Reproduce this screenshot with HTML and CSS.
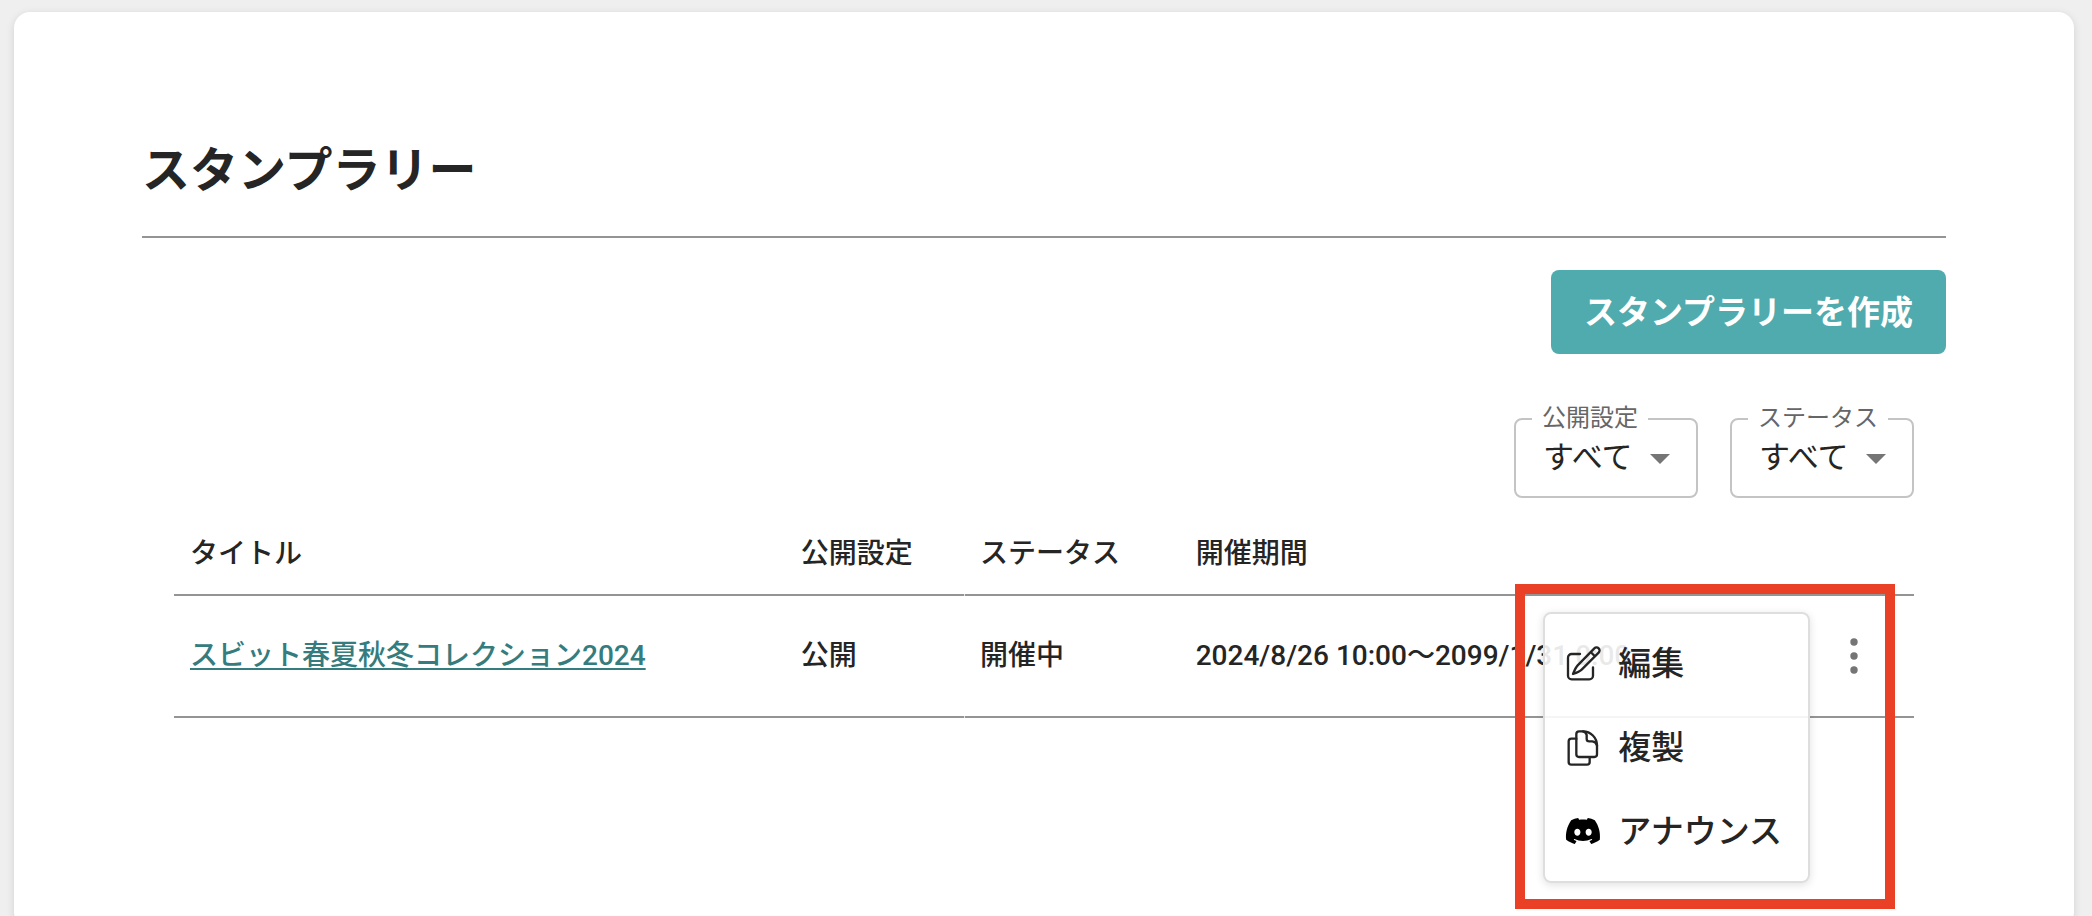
FILE: index.html
```html
<!DOCTYPE html>
<html lang="ja">
<head>
    <meta charset="UTF-8">
    <meta name="viewport" content="width=device-width, initial-scale=1.0">
    <title>スタンプラリー</title>
    <link rel="stylesheet" href="styles.css">
</head>
<body>
    <main class="card">
        <h1>スタンプラリー</h1>

        <div class="toolbar">
            <button type="button" class="create-btn">スタンプラリーを作成</button>
        </div>

        <div class="content">
            <div class="filters">
                <fieldset class="filter">
                    <legend><label for="visibility">公開設定</label></legend>
                    <div class="select-wrap">
                        <select id="visibility">
                            <option>すべて</option>
                        </select>
                    </div>
                </fieldset>
                <fieldset class="filter">
                    <legend><label for="status">ステータス</label></legend>
                    <div class="select-wrap">
                        <select id="status">
                            <option>すべて</option>
                        </select>
                    </div>
                </fieldset>
            </div>

            <table>
                <thead>
                    <tr>
                        <th class="col-title">タイトル</th>
                        <th class="col-visibility">公開設定</th>
                        <th class="col-status">ステータス</th>
                        <th>開催期間</th>
                        <th class="col-action"></th>
                    </tr>
                </thead>
                <tbody>
                    <tr>
                        <td><a href="#">スビット春夏秋冬コレクション2024</a></td>
                        <td>公開</td>
                        <td class="col-status">開催中</td>
                        <td>2024/8/26 10:00〜2099/1/31 0:00</td>
                        <td class="col-action">
                            <button type="button" class="more-btn" aria-label="メニュー">
                                <svg viewBox="0 0 56 56">
                                    <circle cx="28" cy="14" r="3.7"/>
                                    <circle cx="28" cy="28" r="3.7"/>
                                    <circle cx="28" cy="42" r="3.7"/>
                                </svg>
                            </button>

                            <!-- Row menu -->
                            <div class="menu">
                                <button type="button" class="menu-item">
                                    <svg class="line-icon" viewBox="48 48 102 102">
                                        <path d="M90 72H65a11 11 0 0 0-11 11v54a11 11 0 0 0 11 11h53a11 11 0 0 0 11-11v-25"/>
                                        <path d="M133 55L83 106Q77 112 69 132Q89 125 95 119L146 68A9 9 0 0 0 133 55ZM122 66L135 79"/>
                                    </svg>
                                    <span>編集</span>
                                </button>
                                <button type="button" class="menu-item">
                                    <svg class="line-icon" viewBox="48 300 102 102">
                                        <path d="M79 326H64a8 8 0 0 0-8 8v62a8 8 0 0 0 8 8h47a8 8 0 0 0 8-8v-14"/>
                                        <path d="M87 304H99C122 304 141 323 141 346V373a8 8 0 0 1-8 8H87a8 8 0 0 1-8-8V312a8 8 0 0 1 8-8Z"/>
                                        <path d="M99 304Q108 306 110 315V326Q110 334 118 334H127Q138 335 141 346"/>
                                    </svg>
                                    <span>複製</span>
                                </button>
                                <button type="button" class="menu-item">
                                    <svg class="discord-icon" viewBox="0 0 24 24">
                                        <path d="M20.317 4.3698a19.7913 19.7913 0 00-4.8851-1.5152.0741.0741 0 00-.0785.0371c-.211.3753-.4447.8648-.6083 1.2495-1.8447-.2762-3.68-.2762-5.4868 0-.1636-.3933-.4058-.8742-.6177-1.2495a.077.077 0 00-.0785-.037 19.7363 19.7363 0 00-4.8852 1.515.0699.0699 0 00-.0321.0277C.5334 9.0458-.319 13.5799.0992 18.0578a.0824.0824 0 00.0312.0561c2.0528 1.5076 4.0413 2.4228 5.9929 3.0294a.0777.0777 0 00.0842-.0276c.4616-.6304.8731-1.2952 1.226-1.9942a.076.076 0 00-.0416-.1057c-.6528-.2476-1.2743-.5495-1.8722-.8923a.077.077 0 01-.0076-.1277c.1258-.0943.2517-.1923.3718-.2914a.0743.0743 0 01.0776-.0105c3.9278 1.7933 8.18 1.7933 12.0614 0a.0739.0739 0 01.0785.0095c.1202.099.246.1981.3728.2924a.077.077 0 01-.0066.1276 12.2986 12.2986 0 01-1.873.8914.0766.0766 0 00-.0407.1067c.3604.698.7719 1.3628 1.225 1.9932a.076.076 0 00.0842.0286c1.961-.6067 3.9495-1.5219 6.0023-3.0294a.077.077 0 00.0313-.0552c.5004-5.177-.8382-9.6739-3.5485-13.6604a.061.061 0 00-.0312-.0286zM8.02 15.3312c-1.1825 0-2.1569-1.0857-2.1569-2.419 0-1.3332.9555-2.4189 2.157-2.4189 1.2108 0 2.1757 1.0952 2.1568 2.419 0 1.3332-.9555 2.4189-2.1569 2.4189zm7.9748 0c-1.1825 0-2.1569-1.0857-2.1569-2.419 0-1.3332.9554-2.4189 2.1569-2.4189 1.2108 0 2.1757 1.0952 2.1568 2.419 0 1.3332-.946 2.4189-2.1568 2.4189Z"/>
                                    </svg>
                                    <span>アナウンス</span>
                                </button>
                            </div>
                            <div class="highlight"></div>
                        </td>
                    </tr>
                </tbody>
            </table>
        </div>
    </main>
</body>
</html>
```
FILE: styles.css
```css
* {
    box-sizing: border-box;
}

body {
    margin: 0;
    overflow: hidden;
    background-color: #efefef;
    color: #252525;
    font-family: Roboto, "Noto Sans CJK JP", sans-serif;
    font-size: 28px;
    font-weight: 500;
}

button, select {
    font-family: inherit;
    color: inherit;
    cursor: pointer;
}

.card {
    min-height: 100vh;
    margin: 12px 18px 0 14px;
    padding: 123px 128px 0;
    background-color: #fff;
    border-radius: 16px;
    box-shadow: 0 2px 8px rgba(0, 0, 0, 0.12);
}

h1 {
    margin: 0;
    padding-bottom: 29px;
    border-bottom: 2px solid #949494;
    font-size: 48px;
    font-weight: 700;
    line-height: 72px;
}

.toolbar {
    display: flex;
    justify-content: flex-end;
    margin-top: 32px;
}

.create-btn {
    height: 84px;
    padding: 0 33px 4px;
    border: none;
    border-radius: 8px;
    background-color: #4fabae;
    color: #fff;
    font-size: 33px;
    font-weight: 700;
}

.content {
    padding: 53px 32px 0;
}

/* Filters */
.filters {
    display: flex;
    justify-content: flex-end;
    gap: 32px;
}

.filter {
    margin: 0;
    padding: 0 0 13px;
    border: 2px solid #c4c4c4;
    border-radius: 8px;
}

.filter legend {
    margin-left: 16px;
    padding: 0 10px 2px;
    color: #666;
    font-size: 24px;
    font-weight: 400;
    line-height: 22px;
}

.select-wrap {
    position: relative;
}

.select-wrap::after {
    content: "";
    position: absolute;
    top: 23px;
    right: 26px;
    border: 10px solid transparent;
    border-top-color: #757575;
    border-bottom: none;
    pointer-events: none;
}

.filter select {
    display: block;
    height: 52px;
    padding: 0 60px 0 27px;
    border: none;
    background: none;
    appearance: none;
    font-size: 31px;
    font-weight: 400;
}

/* Stamp rally list */
table {
    width: 100%;
    margin-top: 12px;
    border-spacing: 0;
    table-layout: fixed;
}

th, td {
    position: relative;
    border-bottom: 2px solid #949494;
    font-weight: 500;
    text-align: left;
    white-space: nowrap;
}

th {
    height: 86px;
    padding: 0 16px 2px;
}

td {
    height: 122px;
    padding: 0 16px 6px;
}

.col-title {
    width: 35.1%;
}

.col-visibility {
    width: 10.3%;
}

.col-status {
    width: 12.4%;
}

/* thin break in the row line */
.col-status::before {
    content: "";
    position: absolute;
    left: 0;
    bottom: -2px;
    width: 1px;
    height: 2px;
    background-color: #e4e4e4;
}

.col-action {
    width: 120px;
    padding: 0;
}

td a {
    color: #347c7e;
    text-decoration: underline;
    text-decoration-thickness: 2px;
    text-decoration-skip-ink: none;
    text-underline-offset: 3px;
}

.more-btn {
    display: block;
    width: 56px;
    height: 56px;
    margin: 0 auto;
    padding: 0;
    border: none;
    background: none;
}

.more-btn svg {
    display: block;
    fill: #757575;
}

/* Row menu */
.menu {
    position: absolute;
    top: 16px;
    right: 104px;
    padding: 7px 0 8px;
    border: 2px solid #dedede;
    border-radius: 8px;
    background-color: rgba(255, 255, 255, 0.9);
    box-shadow: 0 2px 8px rgba(0, 0, 0, 0.12);
    z-index: 1;
}

.menu-item {
    display: flex;
    align-items: center;
    gap: 18px;
    width: 100%;
    height: 84px;
    padding: 0 26px 0 21px;
    border: none;
    background: none;
    font-size: 33px;
    font-weight: 500;
}

.menu-item span {
    padding-bottom: 4px;
}

.menu-item svg {
    width: 34px;
    height: 34px;
    overflow: visible;
}

.line-icon {
    fill: none;
    stroke: #252525;
    stroke-width: 7;
    stroke-linecap: round;
    stroke-linejoin: round;
}

.discord-icon {
    fill: #000;
}

.highlight {
    position: absolute;
    top: -12px;
    right: 19px;
    width: 380px;
    height: 325px;
    border: 10px solid #ea4025;
    pointer-events: none;
    z-index: 2;
}
```
